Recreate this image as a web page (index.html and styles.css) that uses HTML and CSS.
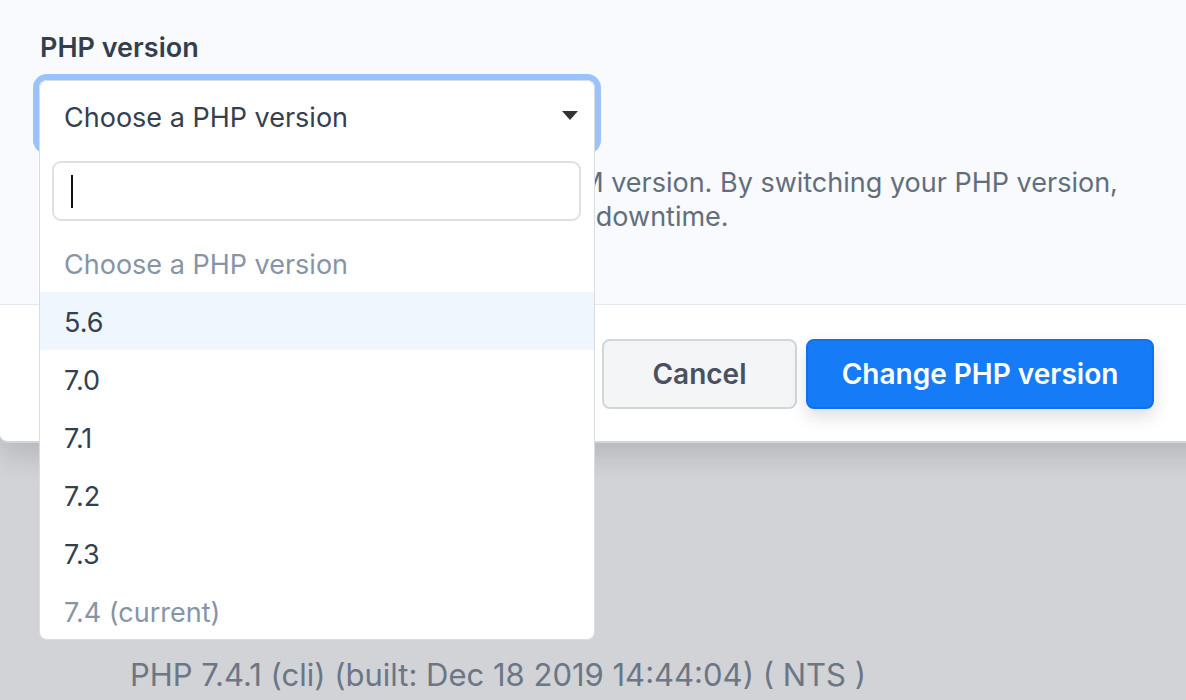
FILE: index.html
```html
<!DOCTYPE html>
<html lang="en">
<head>
    <meta charset="UTF-8">
    <meta name="viewport" content="width=device-width, initial-scale=1.0">
    <title>Change PHP version</title>
    <link rel="stylesheet" href="styles.css">
</head>
<body>
    <div class="modal">
        <div class="modal-body">
            <label class="field-label">PHP version</label>

            <div class="select-wrap">
                <div class="select">Choose a PHP version</div>

                <div class="dropdown">
                    <div class="dropdown-head">
                        <span>Choose a PHP version</span>
                        <span class="arrow"></span>
                    </div>
                    <div class="dropdown-search">
                        <div class="search-input"><span class="caret"></span></div>
                    </div>
                    <ul class="options">
                        <li class="option placeholder">Choose a PHP version</li>
                        <li class="option highlighted">5.6</li>
                        <li class="option">7.0</li>
                        <li class="option">7.1</li>
                        <li class="option">7.2</li>
                        <li class="option">7.3</li>
                        <li class="option disabled">7.4 (current)</li>
                    </ul>
                </div>
            </div>

            <p class="help">
                Your site will switch to the chosen PHP-FPM version. By switching your PHP version,<br>
                your site might then have a few seconds of downtime.
            </p>
        </div>

        <div class="modal-footer">
            <button class="btn btn-cancel">Cancel</button>
            <button class="btn btn-primary">Change PHP version</button>
        </div>
    </div>

    <div class="cli-output">PHP 7.4.1 (cli) (built: Dec 18 2019 14:44:04) ( NTS )</div>
</body>
</html>
```

FILE: styles.css
```css
* {
    box-sizing: border-box;
    margin: 0;
    padding: 0;
}

body {
    font-family: Inter, "Noto Sans", sans-serif;
    background: #d1d3d7;
    overflow: hidden;
    color: #3d4852;
}

.modal {
    width: 1226px;
    background: white;
    border-bottom: 2px solid #cfd6dd;
    border-radius: 0 0 0 8px;
    box-shadow: 0 12px 30px rgba(0,0,0,0.14);
}

.modal-body {
    background: #f8fafd;
    padding: 31px 72px 70px 40px;
    border-bottom: 1px solid #e2e8f0;
}

.field-label {
    display: block;
    font-size: 27px;
    font-weight: 600;
    color: #333f4d;
    line-height: 34px;
    margin-bottom: 15px;
}

.select-wrap {
    position: relative;
    width: 556px;
    margin-left: -1px;
}

.select {
    height: 68px;
    border-radius: 8px;
    background: white;
    box-shadow: 0 0 0 6px #99c3f9;
}

.dropdown {
    position: absolute;
    top: 0;
    left: 0;
    right: 0;
    height: 560px;
    background: white;
    border: 1px solid #d8dde3;
    border-radius: 8px;
    overflow: hidden;
    z-index: 2;
}

.dropdown-head {
    height: 69px;
    display: flex;
    align-items: center;
    justify-content: space-between;
    padding: 3px 16px 0 24px;
    font-size: 27px;
    color: #35404e;
}

.arrow {
    width: 0;
    height: 0;
    border-left: 8px solid transparent;
    border-right: 8px solid transparent;
    border-top: 9px solid #333;
    margin-top: -4px;
}

.dropdown-search {
    padding: 11px 13px 13px 12px;
}

.search-input {
    height: 60px;
    border: 2px solid #dde1e6;
    border-radius: 9px;
    display: flex;
    align-items: center;
    padding-left: 17px;
}

.caret {
    width: 2px;
    height: 33px;
    background: #111;
}

.options {
    list-style: none;
}

.option {
    height: 58px;
    line-height: 55px;
    padding: 3px 0 0 24px;
    font-size: 27px;
    color: #35404e;
}

.option.placeholder {
    color: #8794a6;
}

.option.highlighted {
    background: #eff6fd;
}

.option.disabled {
    color: #8794a6;
}

.help {
    margin-top: 18px;
    font-size: 27px;
    line-height: 34px;
    color: #626e7c;
    white-space: nowrap;
}

.modal-footer {
    display: flex;
    justify-content: flex-end;
    gap: 9px;
    padding: 34px 72px 32px 40px;
}

.btn {
    height: 70px;
    border-radius: 8px;
    font-family: inherit;
    font-size: 28px;
    font-weight: 600;
}

.btn-cancel {
    width: 195px;
    background: #f4f5f7;
    border: 2px solid #d2d5da;
    color: #4a5060;
}

.btn-primary {
    width: 348px;
    background: #167bf6;
    border: 2px solid #0f71ec;
    color: white;
    box-shadow: 0 8px 18px rgba(0,0,0,0.13);
}

.cli-output {
    margin-top: 212px;
    padding-left: 130px;
    font-size: 31px;
    line-height: 40px;
    color: #6c7684;
}
```
